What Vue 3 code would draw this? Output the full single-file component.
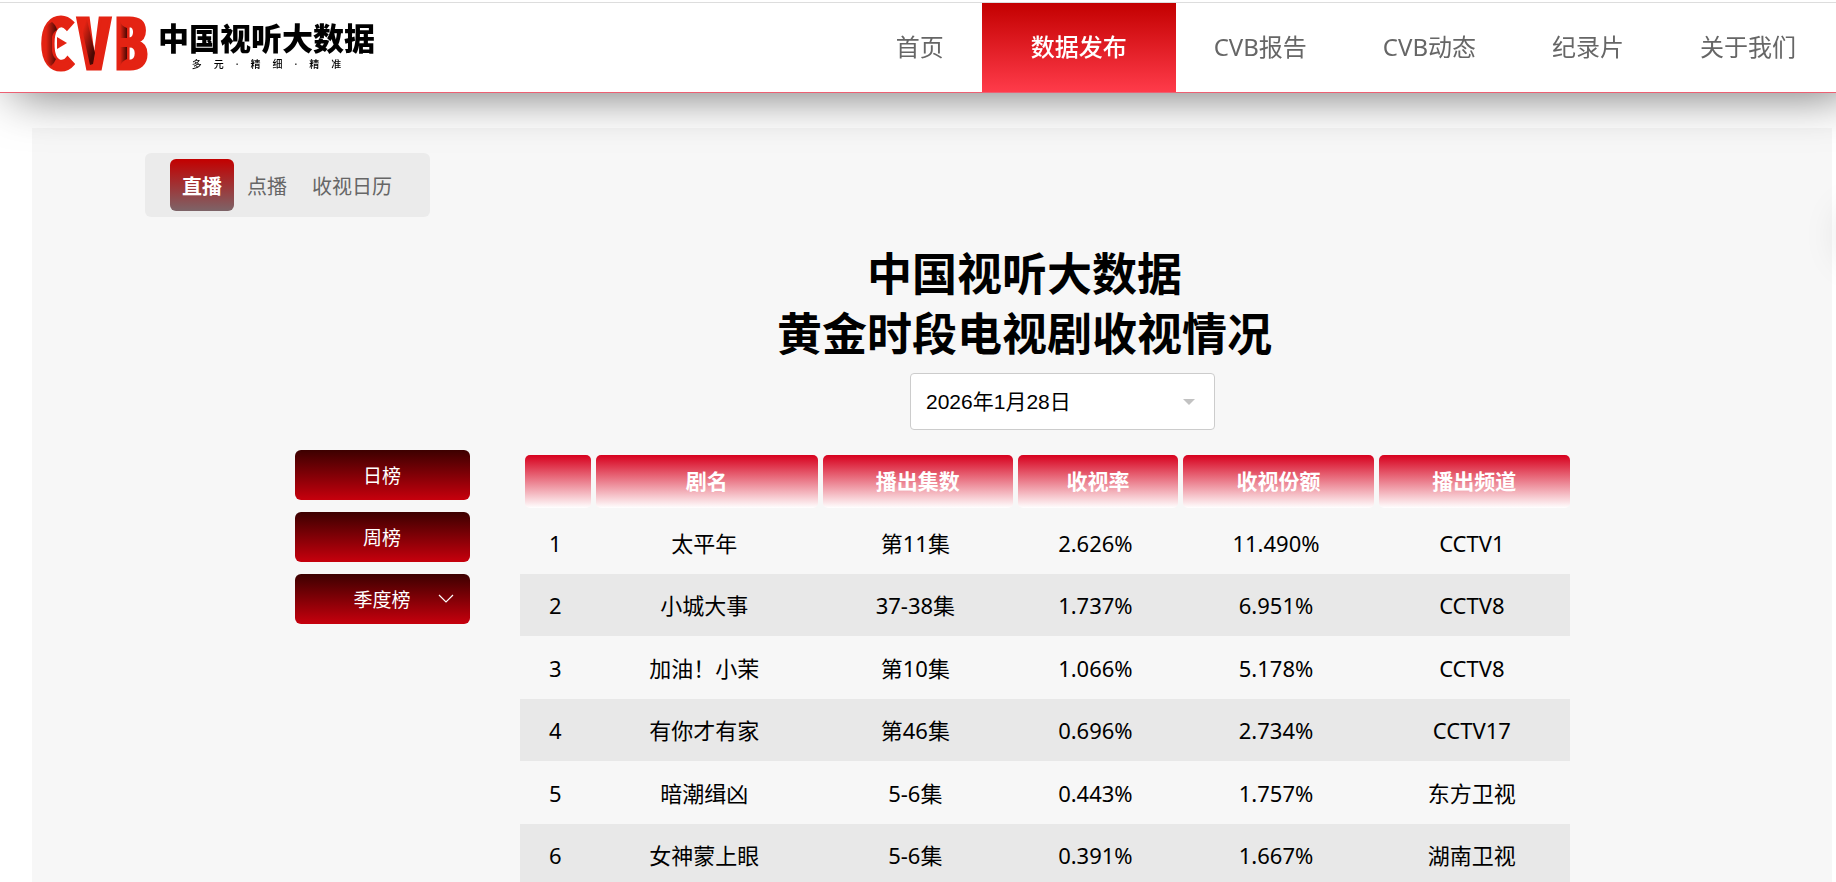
<template>
  <div class="page">
    <header class="header">
      <a class="logo" href="#" aria-label="中国视听大数据">
        <svg class="logo-mark" viewBox="0 0 112 64" width="112" height="64" aria-hidden="true">
          <defs>
            <linearGradient id="fold" x1="0" y1="0" x2="1" y2="0">
              <stop offset="0" stop-color="#e42313" />
              <stop offset="1" stop-color="#4a0803" />
            </linearGradient>
            <linearGradient id="foldV" x1="0" y1="0" x2="1" y2="1">
              <stop offset="0.2" stop-color="#e42313" />
              <stop offset="0.8" stop-color="#4a0803" />
            </linearGradient>
          </defs>
          <text class="logo-letters" x="0 37 74" y="56">CVB</text>
          <path d="M6 14 Q9 10 12 9 Q16 12 17 17 Q13 19 12 24 V38 Q13 44 16 46 Q14 51 11 53 Q8 51 6 48 Z" fill="url(#fold)" />
          <path d="M17 24 L27 30 L17 36 Z" fill="#e42313" />
          <path d="M40 7 L47 7 L55 40 L53 51 L50 52 Z" fill="url(#foldV)" />
          <path d="M80 8 Q81 13 87 15 V25 H80 Z" fill="url(#fold)" />
          <path d="M80 34 H87 V46 Q82 48 80 53 Z" fill="url(#fold)" />
        </svg>
        <span class="logo-text">
          <strong>中国视听大数据</strong>
          <span class="slogan">
            <span v-for="(char, i) in slogan" :key="i">{{ char }}</span>
          </span>
        </span>
      </a>
      <nav class="nav">
        <a v-for="item in navItems" :key="item" href="#" :class="{ active: item === activeNav }" @click.prevent="activeNav = item">{{ item }}</a>
      </nav>
    </header>

    <main class="panel">
      <div class="tabs">
        <button v-for="tab in tabs" :key="tab" type="button" :class="{ active: tab === activeTab }" @click="activeTab = tab">{{ tab }}</button>
      </div>

      <div class="board">
        <div class="heading">
          <h1>中国视听大数据<br />黄金时段电视剧收视情况</h1>
          <div class="date-select">
            <select v-model="date" aria-label="日期">
              <option>2026年1月28日</option>
            </select>
            <span class="caret"></span>
          </div>
        </div>

        <aside class="ranks">
          <button type="button">日榜</button>
          <button type="button">周榜</button>
          <button type="button">
            季度榜
            <svg class="chevron" viewBox="0 0 16 10" width="16" height="10" aria-hidden="true">
              <path d="M1 1 L8 8 L15 1" fill="none" stroke="#fff" stroke-width="1.2" />
            </svg>
          </button>
        </aside>

        <table class="ratings">
          <colgroup>
            <col v-for="(col, i) in columns" :key="i" :style="{ width: col.width }" />
          </colgroup>
          <thead>
            <tr>
              <th v-for="(col, i) in columns" :key="i"><div>{{ col.title }}</div></th>
            </tr>
          </thead>
          <tbody>
            <tr v-for="(row, i) in rows" :key="row[0]">
              <td>{{ i + 1 }}</td>
              <td v-for="(cell, j) in row" :key="j">{{ cell }}</td>
            </tr>
          </tbody>
        </table>
      </div>
    </main>

    <div class="float-button"></div>
  </div>
</template>

<script setup>
import { ref } from 'vue'

const slogan = ['多', '元', '·', '精', '细', '·', '精', '准']

const navItems = ['首页', '数据发布', 'CVB报告', 'CVB动态', '纪录片', '关于我们']
const activeNav = ref('数据发布')

const tabs = ['直播', '点播', '收视日历']
const activeTab = ref('直播')

const date = ref('2026年1月28日')

const columns = [
  { title: '', width: '6.8%' },
  { title: '剧名', width: '21.6%' },
  { title: '播出集数', width: '18.6%' },
  { title: '收视率', width: '15.7%' },
  { title: '收视份额', width: '18.7%' },
  { title: '播出频道', width: '18.6%' },
]

const rows = [
  ['太平年', '第11集', '2.626%', '11.490%', 'CCTV1'],
  ['小城大事', '37-38集', '1.737%', '6.951%', 'CCTV8'],
  ['加油！小茉', '第10集', '1.066%', '5.178%', 'CCTV8'],
  ['有你才有家', '第46集', '0.696%', '2.734%', 'CCTV17'],
  ['暗潮缉凶', '5-6集', '0.443%', '1.757%', '东方卫视'],
  ['女神蒙上眼', '5-6集', '0.391%', '1.667%', '湖南卫视'],
]
</script>

<style>
body {
  margin: 0;
  background: #fff;
}
</style>

<style scoped>
.page {
  height: 100vh;
  overflow: hidden;
  font-family: "Noto Sans", "Noto Sans CJK SC", sans-serif;
  color: #000;
}

a {
  text-decoration: none;
}

button {
  font-family: inherit;
  border: none;
  cursor: pointer;
}

.header {
  position: relative;
  z-index: 2;
  display: flex;
  justify-content: space-between;
  margin-top: 2px;
  height: 89px;
  padding-right: 2px;
  background: #fff;
  border-top: 1px solid #ddd;
  border-bottom: 1px solid #ec6073;
  box-shadow: 14px 0 50px rgba(0, 0, 0, 0.6);
  clip-path: inset(0 0 -100px 0);
}

.logo {
  display: flex;
  align-items: flex-start;
  gap: 6px;
  padding: 10px 0 0 40px;
  color: #000;
}

.logo-mark {
  overflow: visible;
}

.logo-letters {
  font-family: "Noto Sans Mono CJK SC", "DejaVu Sans Mono", monospace;
  font-size: 68px;
  font-weight: bold;
  fill: #e42313;
  stroke: #e42313;
  stroke-width: 3px;
}

.logo-text {
  display: flex;
  flex-direction: column;
  align-items: center;
  padding-top: 7px;
}

.logo-text strong {
  font-size: 31px;
  font-weight: 900;
  line-height: 36px;
}

.slogan {
  display: flex;
  gap: 12px;
  font-size: 10px;
  font-weight: 500;
  line-height: 16px;
}

.nav {
  display: flex;
}

.nav a {
  padding: 0 38px;
  font-size: 24px;
  line-height: 88px;
  color: #666;
}

.nav a.active {
  padding: 0 49px;
  color: #fff;
  font-weight: 500;
  background: linear-gradient(#c30000, #ff3b4a);
}

.panel {
  margin: 35px 4px 0 32px;
  padding-top: 25px;
  background: #f7f7f7;
}

.tabs {
  display: flex;
  align-items: center;
  gap: 1px;
  width: fit-content;
  height: 64px;
  margin-left: 113px;
  padding: 0 26px 0 25px;
  border-radius: 6px;
  background: #ebebeb;
  box-sizing: border-box;
}

.tabs button {
  height: 52px;
  padding: 0 12px;
  font-size: 20px;
  color: #666;
  background: none;
  border-radius: 6px;
}

.tabs button.active {
  color: #fff;
  font-weight: bold;
  background: linear-gradient(#c30000, #7d6468);
}

.board {
  display: grid;
  grid-template-columns: 175px minmax(0, 1050px);
  justify-content: center;
  column-gap: 50px;
  padding-top: 27px;
}

.heading {
  grid-column: 2;
  display: flex;
  flex-direction: column;
  align-items: center;
}

h1 {
  margin: 0;
  padding-right: 40px;
  font-size: 45px;
  line-height: 60px;
  font-weight: bold;
  text-align: center;
}

.date-select {
  position: relative;
  margin: 9px 0 20px 36px;
}

.date-select select {
  display: block;
  width: 305px;
  height: 57px;
  padding: 0 15px;
  font-family: "Liberation Sans", "Noto Sans CJK SC", sans-serif;
  font-size: 21px;
  color: #000;
  background: #fff;
  border: 1px solid #ccc;
  border-radius: 4px;
  appearance: none;
}

.caret {
  position: absolute;
  top: 26px;
  right: 20px;
  border: 6px solid transparent;
  border-top-color: #c2c2c2;
  border-bottom: none;
  pointer-events: none;
}

.ranks {
  display: flex;
  flex-direction: column;
  gap: 12px;
}

.ranks button {
  position: relative;
  height: 50px;
  padding: 0;
  font-size: 19px;
  color: #fff;
  background: linear-gradient(#3c0000, #c7000d);
  border-radius: 6px;
}

.chevron {
  position: absolute;
  top: 20px;
  right: 16px;
}

.ratings {
  width: 100%;
  margin-top: 5px;
  table-layout: fixed;
  border-collapse: collapse;
  font-size: 22px;
  line-height: 28px;
  text-align: center;
}

.ratings th {
  padding: 0 0 3px 5px;
  font-size: 21px;
}

.ratings th div {
  height: 53px;
  line-height: 53px;
  color: #fff;
  background: linear-gradient(#d7001d, #fff);
  border-radius: 5px;
}

.ratings td {
  height: 63px;
  padding: 0;
}

.ratings tbody tr:nth-child(even) td {
  height: 62px;
  background: #e8e8e8;
}

/* floating button parked past the right edge, only its shadow shows */
.float-button {
  position: fixed;
  top: 210px;
  right: -56px;
  width: 50px;
  height: 50px;
  border-radius: 50%;
  box-shadow: 0 0 40px rgba(0, 0, 0, 0.15);
}
</style>
